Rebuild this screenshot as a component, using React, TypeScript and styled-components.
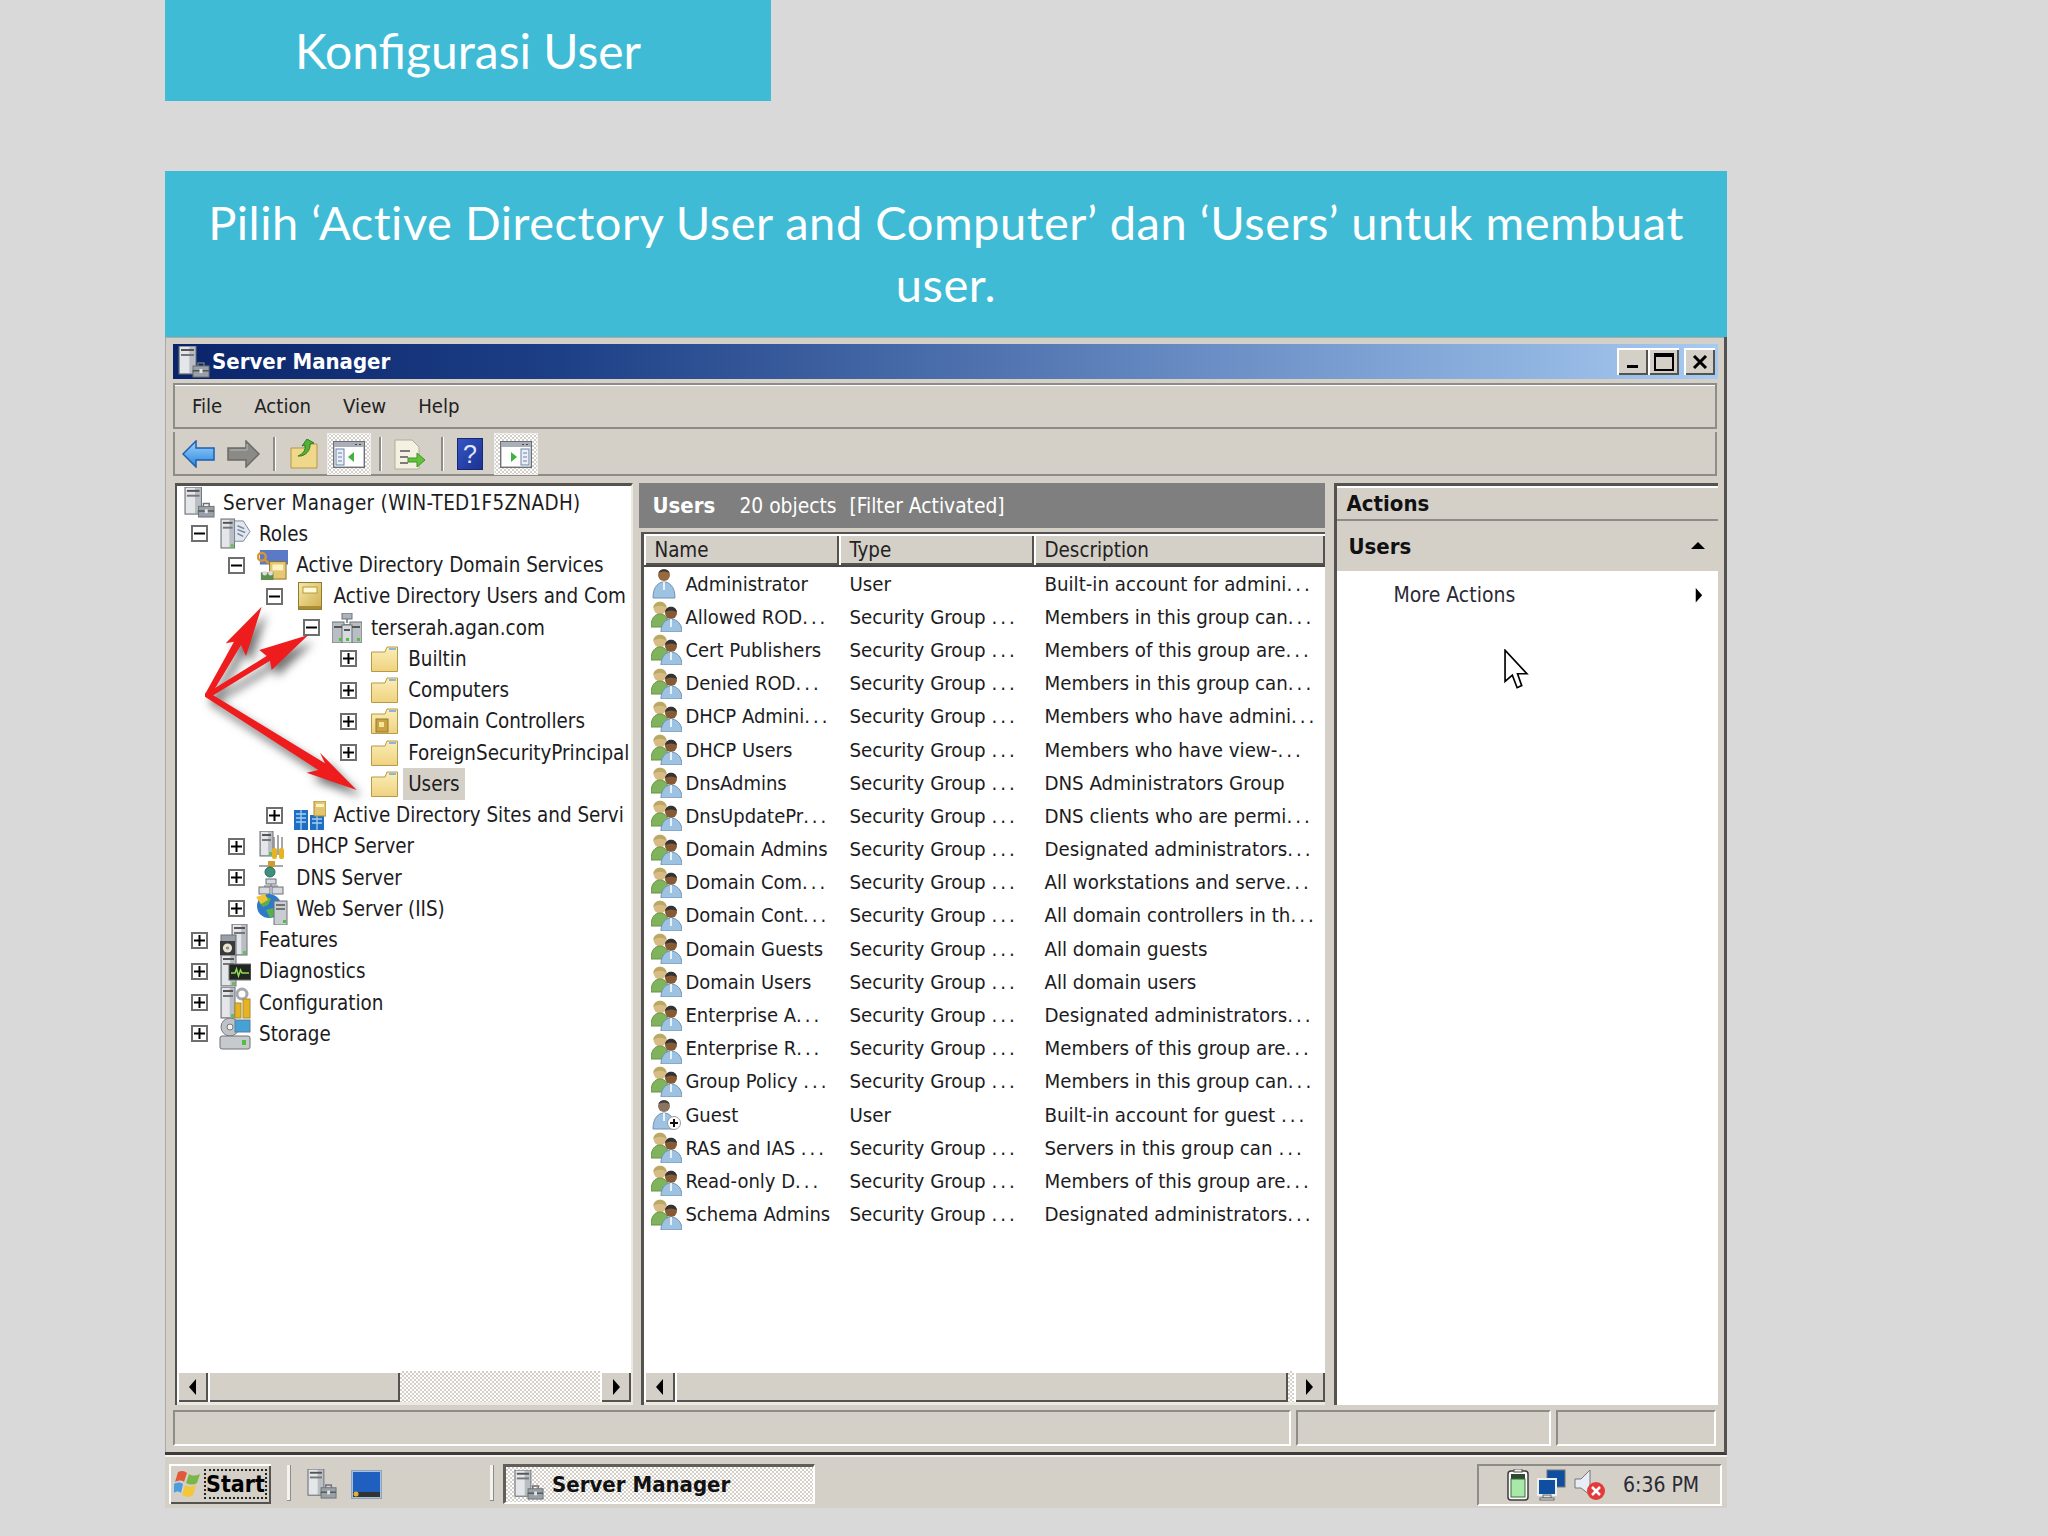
import React from "react";
import styled, { createGlobalStyle, css } from "styled-components";

const Global = createGlobalStyle`
  html, body { margin: 0; padding: 0; background: #d9d9d9; }
  #root { width: 2048px; height: 1536px; overflow: hidden; }
`;

const FACE = "#d4d0c8";
const UI = `"DejaVu Sans Condensed", "DejaVu Sans", "Liberation Sans", sans-serif`;

const raised = css`
  background: ${FACE};
  box-shadow: inset 2px 2px 0 #fff, inset -2px -2px 0 #55534f;
`;

const Slide = styled.div`
  width: 2048px;
  height: 1536px;
  background: #d9d9d9;
  padding-left: 165px;
  box-sizing: border-box;
  font-family: ${UI};
`;
const TitleBox = styled.div`
  width: 606px;
  height: 101px;
  margin-bottom: 70px;
  background: #3fbbd6;
  color: #fff;
  font: 400 48px/101px Lato, "Open Sans", sans-serif;
  text-align: center;
`;
const Banner = styled.div`
  width: 1562px;
  height: 166px;
  box-sizing: border-box;
  padding: 20px 30px 0;
  background: #3fbbd6;
  color: #fff;
  font: 400 47px/62px Lato, "Open Sans", sans-serif;
  letter-spacing: 0.53px;
  text-align: center;
`;
const Win = styled.div`
  width: 1562px;
  height: 1118px;
  box-sizing: border-box;
  padding: 7px 6px 0 8px;
  background: ${FACE};
  border-right: 3px solid #55534f;
  border-bottom: 3px solid #3d3c3a;
  box-shadow: inset 1px 1px 0 #a8a8a4;
  display: flex;
  flex-direction: column;
`;
const TitleBar = styled.div`
  height: 35px;
  margin-bottom: 4px;
  display: flex;
  align-items: center;
  padding: 0 3px 0 5px;
  background: linear-gradient(90deg, #0a246a 0%, #1d3f86 25%, #6f93c9 70%, #a6caf0 100%);
`;
const TitleText = styled.span`
  flex: 1;
  margin-left: 2px;
  color: #fff;
  font-weight: 700;
  font-size: 22px;
`;
const CtlBtn = styled.div<{ $gap?: number }>`
  ${raised}
  width: 31px;
  height: 27px;
  margin-left: ${(p) => p.$gap ?? 0}px;
  display: flex;
  align-items: center;
  justify-content: center;
`;
const MenuBar = styled.div`
  height: 46px;
  margin-right: 1px;
  margin-bottom: 3px;
  box-sizing: border-box;
  padding-left: 19px;
  display: flex;
  align-items: center;
  gap: 32px;
  background: ${FACE};
  font-size: 20.2px;
  color: #222;
  box-shadow: inset 2px 2px 0 #8e8c87, inset -2px -2px 0 #8e8c87, inset 0 3px 0 #fff;
`;
const ToolBar = styled.div`
  height: 44px;
  margin-right: 1px;
  margin-bottom: 7px;
  box-sizing: border-box;
  padding-left: 9px;
  display: flex;
  align-items: center;
  background: ${FACE};
  box-shadow: inset 2px 0 0 #8e8c87, inset -2px -2px 0 #8e8c87;
`;
const ToolSlot = styled.div<{ $w: number; $ml?: number }>`
  width: ${(p) => p.$w}px;
  margin-left: ${(p) => p.$ml ?? 0}px;
  display: flex;
  align-items: center;
  justify-content: center;
`;
const ToolSep = styled.div<{ $ml: number }>`
  width: 2px;
  height: 34px;
  margin-left: ${(p) => p.$ml}px;
  background: #8e8c87;
  box-shadow: 1px 0 0 #fff;
`;
const ToolToggle = styled.div<{ $ml: number }>`
  width: 44px;
  height: 42px;
  margin-left: ${(p) => p.$ml}px;
  display: flex;
  align-items: center;
  justify-content: center;
  background: repeating-conic-gradient(#d4d0c8 0 25%, #fff 0 50%) 0 0 / 4px 4px;
  box-shadow: inset 0 0 0 1px #eee;
`;
const Panes = styled.div`
  height: 922px;
  display: flex;
  margin-bottom: 5px;
`;
const TreePane = styled.div`
  position: relative;
  width: 459px;
  box-sizing: border-box;
  margin-left: 2px;
  display: flex;
  flex-direction: column;
  background: #fff;
  border-top: 3px solid #55534f;
  border-left: 2px solid #55534f;
  border-right: 2px solid #ece9e2;
  overflow: hidden;
`;
const TreeBody = styled.div`
  flex: 1;
  padding-top: 1px;
  overflow: hidden;
`;
const TreeRow = styled.div<{ $level: number }>`
  height: 31.25px;
  display: flex;
  align-items: center;
  white-space: nowrap;
  font-size: 20.4px;
  color: #1c1c22;
  padding-left: ${(p) => (p.$level === 0 ? 7 : 14 + (p.$level - 1) * 37.3)}px;
`;
const Expander = styled.div`
  flex: 0 0 17px;
  width: 17px;
  height: 17px;
  margin-right: 12px;
  box-sizing: border-box;
  border: 2px solid #6f6f6f;
  background: #fff;
  display: flex;
  align-items: center;
  justify-content: center;
`;
const ExpanderGap = styled.div`
  flex: 0 0 29px;
`;
const TreeIconSlot = styled.div`
  flex: 0 0 30px;
  width: 30px;
  height: 31px;
  display: flex;
  align-items: center;
  justify-content: center;
  svg {
    flex: none;
  }
`;
const TreeLabel = styled.span<{ $sel?: boolean; $track?: boolean }>`
  margin-left: ${(p) => (p.$sel ? 4 : 9)}px;
  padding: ${(p) => (p.$sel ? "4px 5px" : "0")};
  background: ${(p) => (p.$sel ? FACE : "transparent")};
  letter-spacing: ${(p) => (p.$track ? "0.36px" : "0")};
`;
const ArrowLayer = styled.svg`
  position: absolute;
  left: 13px;
  top: 114px;
  filter: drop-shadow(5px 7px 5px rgba(0, 0, 0, 0.55));
  pointer-events: none;
`;
const Scroll = styled.div`
  height: 31px;
  flex: 0 0 31px;
  display: flex;
  background: ${FACE};
`;
const ScrollBtn = styled.div`
  ${raised}
  flex: 0 0 31px;
  display: flex;
  align-items: center;
  justify-content: center;
`;
const Thumb = styled.div<{ $w?: number }>`
  ${raised}
  flex: ${(p) => (p.$w ? `0 0 ${p.$w}px` : "1")};
`;
const Track = styled.div<{ $w?: number }>`
  flex: ${(p) => (p.$w ? `0 0 ${p.$w}px` : "1")};
  background: repeating-conic-gradient(#d4d0c8 0 25%, #fff 0 50%) 0 0 / 4px 4px;
`;
const ScrollFoot = styled.div`
  height: 3px;
  flex: 0 0 3px;
  background: #ece9e2;
`;
const MidPane = styled.div`
  width: 686px;
  margin-left: 6px;
  display: flex;
  flex-direction: column;
`;
const MidHead = styled.div`
  flex: 0 0 45px;
  display: flex;
  align-items: center;
  padding-left: 13px;
  background: #7f7f7f;
  color: #fff;
  font-size: 20.8px;
  margin-bottom: 4px;
  white-space: nowrap;
`;
const MidTitle = styled.b`
  width: 87px;
  font-size: 22px;
`;
const MidCount = styled.span`
  width: 110px;
`;
const ListBox = styled.div`
  flex: 1;
  min-height: 0;
  margin-left: 2px;
  display: flex;
  flex-direction: column;
  background: #fff;
  border-top: 2px solid #55534f;
  border-left: 3px solid #55534f;
  overflow: hidden;
`;
const HeadRow = styled.div`
  flex: 0 0 33px;
  box-sizing: border-box;
  display: grid;
  grid-template-columns: 195px 195px 1fr;
  border-bottom: 2px solid #4a4946;
`;
const HeadCell = styled.div`
  ${raised}
  height: 31px;
  box-sizing: border-box;
  padding: 1px 0 0 10px;
  font-size: 20.4px;
  line-height: 31px;
  color: #222;
`;
const Rows = styled.div`
  flex: 1;
  overflow: hidden;
`;
const Row = styled.div`
  height: 33.2px;
  display: grid;
  grid-template-columns: 195px 195px 1fr;
  align-items: center;
  font-size: 20px;
  color: #1c1c22;
  white-space: nowrap;
`;
const NameCell = styled.div`
  display: flex;
  align-items: center;
  padding-left: 7px;
  overflow: hidden;
`;
const NameText = styled.span`
  margin-left: 3px;
`;
const Cell = styled.div`
  padding-left: 10px;
  font-size: 20.3px;
  overflow: hidden;
`;
const Dots = styled.span`
  letter-spacing: 3px;
`;
const ActionsPane = styled.div`
  position: relative;
  width: 382px;
  margin-left: 9px;
  display: flex;
  flex-direction: column;
  background: #fff;
  border-top: 3px solid #55534f;
  border-left: 3px solid #55534f;
`;
const ActionsHead = styled.div`
  flex: 0 0 34px;
  box-sizing: border-box;
  padding-left: 10px;
  background: ${FACE};
  border-top: 2px solid #fff;
  border-bottom: 2px solid #8e8c87;
  font-size: 22px;
  font-weight: 700;
  line-height: 31px;
  color: #111;
`;
const ActionsGroup = styled.div`
  flex: 0 0 50px;
  display: flex;
  align-items: center;
  justify-content: space-between;
  padding: 0 13px 0 12px;
  background: ${FACE};
  font-size: 22px;
  font-weight: 700;
  color: #111;
`;
const ActionItem = styled.div`
  margin-top: 6px;
  height: 36px;
  display: flex;
  align-items: center;
  justify-content: space-between;
  padding: 0 14px 0 57px;
  font-size: 21px;
  color: #2a2a35;
`;
const Cursor = styled.svg`
  position: absolute;
  left: 167px;
  top: 163px;
`;
const StatusBar = styled.div`
  height: 36px;
  display: flex;
  gap: 5px;
  margin-right: 2px;
`;
const StatusCell = styled.div<{ $w?: number }>`
  flex: ${(p) => (p.$w ? `0 0 ${p.$w}px` : "1")};
  box-sizing: border-box;
  border-top: 2px solid #8e8c87;
  border-left: 2px solid #8e8c87;
  border-right: 2px solid #fff;
  border-bottom: 2px solid #fff;
`;
const Taskbar = styled.div`
  width: 1562px;
  height: 53px;
  box-sizing: border-box;
  padding: 7px 4px 4px 4px;
  display: flex;
  background: ${FACE};
  border-top: 2px solid #f4f3ef;
`;
const StartBtn = styled.div`
  ${raised}
  width: 102px;
  height: 40px;
  display: flex;
  align-items: center;
  padding-left: 5px;
  box-sizing: border-box;
  gap: 2px;
`;
const StartLabel = styled.span`
  font-weight: 700;
  font-size: 23px;
  color: #000;
  padding: 1px 2px;
  line-height: 28px;
  outline: 2px dotted #222;
  outline-offset: -2px;
`;
const TaskSep = styled.div<{ $ml: number }>`
  width: 4px;
  height: 36px;
  margin: 1px 0 0 ${(p) => p.$ml}px;
  background: #f4f3ef;
  box-shadow: inset -1px -1px 0 #8e8c87;
`;
const QuickIcon = styled.div<{ $ml: number }>`
  margin-left: ${(p) => p.$ml}px;
  display: flex;
  align-items: center;
`;
const TaskItem = styled.div`
  width: 312px;
  height: 40px;
  margin-left: 9px;
  box-sizing: border-box;
  padding-left: 8px;
  display: flex;
  align-items: center;
  gap: 8px;
  font-weight: 700;
  font-size: 22px;
  color: #111;
  background: repeating-conic-gradient(#d4d0c8 0 25%, #fff 0 50%) 0 0 / 4px 4px;
  border-top: 3px solid #605e5a;
  border-left: 3px solid #605e5a;
  border-right: 2px solid #fff;
  border-bottom: 2px solid #fff;
`;
const Tray = styled.div`
  width: 245px;
  height: 42px;
  margin-left: auto;
  margin-right: 1px;
  box-sizing: border-box;
  padding-left: 28px;
  display: flex;
  align-items: center;
  gap: 8px;
  border-top: 2px solid #8e8c87;
  border-left: 2px solid #8e8c87;
  border-right: 2px solid #fff;
  border-bottom: 2px solid #fff;
`;
const Clock = styled.span`
  margin-left: 9px;
  font-size: 21px;
  color: #2a2a35;
`;

/* ---------- icons ---------- */
type IP = { s?: number };

const Plus = () => (
  <svg width="11" height="11" viewBox="0 0 11 11">
    <path d="M0 5.5H11M5.5 0V11" stroke="#000" strokeWidth="2" />
  </svg>
);
const Minus = () => (
  <svg width="11" height="11" viewBox="0 0 11 11">
    <path d="M0 5.5H11" stroke="#000" strokeWidth="2" />
  </svg>
);
const Tri = ({ dir, size = 12 }: { dir: "l" | "r" | "u"; size?: number }) => {
  const d = dir === "l" ? "M9 0V16L2 8Z" : dir === "r" ? "M3 0V16L10 8Z" : "M0 10H14L7 3Z";
  return (
    <svg width={size} height={dir === "u" ? size : size * 1.5} viewBox={dir === "u" ? "0 0 14 14" : "0 0 12 16"}>
      <path d={d} fill="#000" />
    </svg>
  );
};
const Tower = ({ x = 4, y = 1, w = 16, h = 24 }: { x?: number; y?: number; w?: number; h?: number }) => (
  <g>
    <rect x={x} y={y} width={w} height={h} fill="#b9bdc4" stroke="#6d7178" strokeWidth="1" />
    <rect x={x + 1} y={y + 1} width={w * 0.55} height={h - 2} fill="#e4e6ea" />
    <rect x={x + 2} y={y + 3} width={w - 4} height="2" fill="#555" />
    <rect x={x + 2} y={y + 8} width={w - 4} height="2" fill="#777" />
    <rect x={x + w - 4} y={y + h - 4} width="3" height="3" fill="#5fc24b" />
  </g>
);
const Case = ({ x = 14, y = 20 }: { x?: number; y?: number }) => (
  <g>
    <path d={`M${x + 5} ${y}v-3h6v3`} fill="none" stroke="#6d7178" strokeWidth="1.5" />
    <rect x={x} y={y} width="16" height="11" fill="#9aa0a8" stroke="#6d7178" />
    <rect x={x} y={y + 4} width="16" height="1.5" fill="#555" />
    <rect x={x + 6.5} y={y + 3} width="3" height="4" fill="#e4e6ea" />
  </g>
);
const ServerMgrIcon = ({ s = 31 }: IP) => (
  <svg width={s} height={s} viewBox="0 0 32 32">
    <Tower x={1} y={0} w={17} h={28} />
    <Case x={15} y={20} />
  </svg>
);
const RolesIcon = ({ s = 31 }: IP) => (
  <svg width={s} height={s} viewBox="0 0 32 32">
    <Tower x={1} y={1} w={14} h={30} />
    <path d="M15 3 24 3 31 14 24 24 15 24Z" fill="#dfe7f2" stroke="#7d8794" />
    <path d="M18 8l7 3M18 12l8 3M18 16l6 3" stroke="#7d8794" strokeWidth="1.5" />
  </svg>
);
const AddsIcon = ({ s = 31 }: IP) => (
  <svg width={s} height={s} viewBox="0 0 32 32">
    <rect x="3" y="0" width="29" height="15" fill="#5b79c6" />
    <circle cx="5" cy="7" r="4" fill="none" stroke="#d9962c" strokeWidth="2.5" />
    <path d="M8 10 17 18" stroke="#d9962c" strokeWidth="2.5" />
    <rect x="13" y="12" width="17" height="18" fill="#e6c873" stroke="#8b7326" />
    <rect x="16" y="15" width="11" height="6" fill="#fff3c4" />
    <rect x="4" y="23" width="13" height="8" fill="#5f8f4e" />
    <circle cx="8" cy="24" r="2.4" fill="#ddd" />
    <circle cx="14" cy="24" r="2.4" fill="#ddd" />
  </svg>
);
const BookIcon = ({ s = 24 }: IP) => (
  <svg width={s} height={s * 1.17} viewBox="0 0 24 28">
    <defs>
      <linearGradient id="bk" x1="0" y1="0" x2="1" y2="1">
        <stop offset="0" stopColor="#f4e8a8" />
        <stop offset="1" stopColor="#d1ae4f" />
      </linearGradient>
    </defs>
    <rect x="0.5" y="0.5" width="23" height="27" fill="url(#bk)" stroke="#8f7a2e" />
    <rect x="5" y="5" width="14" height="6" fill="#fff9d8" stroke="#b89a3c" />
    <rect x="1" y="24" width="22" height="3" fill="#a98c33" />
  </svg>
);
const DomainIcon = ({ s = 30 }: IP) => (
  <svg width={s} height={s} viewBox="0 0 30 30">
    <rect x="10" y="0" width="10" height="6" fill="#aeb4bb" stroke="#6d7178" />
    <path d="M15 6V10M5 12H25" stroke="#6d7178" strokeWidth="1.5" />
    <rect x="0" y="9" width="12" height="21" fill="#b9bec5" stroke="#6d7178" />
    <rect x="18" y="9" width="12" height="21" fill="#b9bec5" stroke="#6d7178" />
    <rect x="10" y="12" width="10" height="18" fill="#d6dade" stroke="#6d7178" />
    <rect x="2" y="13" width="8" height="2" fill="#555" />
    <rect x="20" y="13" width="8" height="2" fill="#555" />
    <rect x="12" y="16" width="6" height="2" fill="#555" />
    <rect x="7" y="25" width="3" height="3" fill="#4ec23a" />
    <rect x="14" y="25" width="3" height="3" fill="#4ec23a" />
    <rect x="25" y="25" width="3" height="3" fill="#4ec23a" />
  </svg>
);
const FolderIcon = ({ dc }: { dc?: boolean }) => (
  <svg width="27" height="26" viewBox="0 0 27 26">
    <defs>
      <linearGradient id="fd" x1="0" y1="0" x2="0" y2="1">
        <stop offset="0" stopColor="#fbeeb8" />
        <stop offset="1" stopColor="#efd27f" />
      </linearGradient>
    </defs>
    <path d="M0.5 6 L14 6 L16 1 L26.5 1 V25.5 H0.5Z" fill="url(#fd)" stroke="#b79a46" />
    <rect x="18" y="2" width="7" height="2" fill="#8fb4dc" />
    {dc && (
      <g>
        <rect x="5" y="11" width="12" height="13" fill="#c9a445" stroke="#8f7a2e" />
        <rect x="8" y="14" width="5" height="5" fill="#f7e49a" />
      </g>
    )}
  </svg>
);
const SitesIcon = () => (
  <svg width="32" height="29" viewBox="0 0 32 29">
    <rect x="0" y="9" width="14" height="20" fill="#1e6fc4" />
    <rect x="16" y="14" width="14" height="15" fill="#1e6fc4" />
    <path d="M2 13h10M2 17h10M2 21h10M7 9v20M18 18h10M18 22h10M23 14v15" stroke="#9fd0f3" strokeWidth="1.3" />
    <rect x="20" y="0" width="12" height="15" fill="#e2c66f" stroke="#a98c33" />
    <rect x="22" y="3" width="8" height="3" fill="#fff3c4" />
  </svg>
);
const DhcpIcon = () => (
  <svg width="27" height="30" viewBox="0 0 27 30">
    <Tower x={1} y={0} w={13} h={25} />
    <path d="M15 6v18M19 4v20M23 6v18" stroke="#8a8a8a" strokeWidth="1.5" />
    <rect x="13" y="17" width="5" height="11" rx="2" fill="#e6b422" />
    <rect x="20" y="17" width="5" height="11" rx="2" fill="#e6b422" />
  </svg>
);
const DnsIcon = () => (
  <svg width="28" height="34" viewBox="0 0 28 34">
    <path d="M1 5H25" stroke="#8a8a8a" strokeWidth="1.5" />
    <rect x="10" y="0" width="7" height="6" fill="#d09a32" />
    <circle cx="12" cy="11" r="5" fill="#3f8f7a" stroke="#2a6a5a" />
    <rect x="8" y="18" width="10" height="5" fill="#d5d8dc" stroke="#6d7178" />
    <rect x="1" y="26" width="11" height="7" fill="#d5d8dc" stroke="#6d7178" />
    <rect x="14" y="26" width="11" height="7" fill="#d5d8dc" stroke="#6d7178" />
    <path d="M13 23v3M6 25H20" stroke="#6d7178" />
  </svg>
);
const IisIcon = () => (
  <svg width="32" height="32" viewBox="0 0 32 32">
    <circle cx="13" cy="13" r="12" fill="#2f79c9" />
    <path d="M3 9c4-5 9-6 12-3l-3 6-5 2ZM10 17l7-2 2 7-5 3Z" fill="#58b04a" />
    <path d="M0 4 9 1 12 7 5 11Z" fill="#f0c438" />
    <rect x="18" y="8" width="13" height="24" fill="#c9ccd1" stroke="#6d7178" />
    <path d="M20 12h9M20 16h9" stroke="#555" strokeWidth="1.5" />
    <rect x="27" y="27" width="3" height="3" fill="#4ec23a" />
  </svg>
);
const FeaturesIcon = () => (
  <svg width="30" height="32" viewBox="0 0 30 32">
    <Tower x={12} y={0} w={15} h={31} />
    <rect x="1" y="11" width="15" height="21" fill="#9aa0a8" stroke="#6d7178" />
    <rect x="0" y="17" width="15" height="14" fill="#3a3a3a" />
    <circle cx="7.5" cy="24" r="4.6" fill="#e9e4cf" />
    <circle cx="7.5" cy="24" r="1.6" fill="#888" />
  </svg>
);
const DiagIcon = () => (
  <svg width="31" height="32" viewBox="0 0 31 32">
    <Tower x={1} y={0} w={15} h={31} />
    <rect x="9" y="9" width="22" height="16" fill="#23261f" stroke="#6d7178" />
    <path d="M11 18h4l1.5-4 2 7 2-6 1.5 3h7" stroke="#8ddc55" strokeWidth="1.5" fill="none" />
  </svg>
);
const ConfigIcon = () => (
  <svg width="31" height="32" viewBox="0 0 31 32">
    <Tower x={1} y={0} w={14} h={31} />
    <circle cx="22" cy="7" r="5" fill="none" stroke="#a5a8ad" strokeWidth="3" />
    <rect x="15" y="16" width="6" height="15" fill="#e6b422" stroke="#a98c33" />
    <rect x="23" y="12" width="7" height="19" fill="#e6b422" stroke="#a98c33" />
  </svg>
);
const StorageIcon = () => (
  <svg width="32" height="32" viewBox="0 0 32 32">
    <circle cx="11" cy="9" r="9" fill="#bfc3c8" stroke="#777" />
    <circle cx="11" cy="9" r="3" fill="#f2f2f2" stroke="#777" />
    <rect x="16" y="2" width="15" height="12" fill="#45a2d6" stroke="#5c7f96" />
    <rect x="1" y="18" width="30" height="13" rx="2" fill="#c7cacd" stroke="#6d7178" />
    <rect x="23" y="22" width="4" height="5" fill="#4ec23a" />
  </svg>
);
const UserIcon = ({ guest }: { guest?: boolean }) => (
  <svg width="31" height="31" viewBox="0 0 31 31">
    <circle cx="13" cy="7" r="6" fill={guest ? "#8a7460" : "#9a6a3f"} />
    <path d="M7.5 5C9 0 17 0 18.5 5 15 3 11 3 7.5 5Z" fill="#3b3b3b" />
    <path d="M2 30C2 18 8 14 13 14 18 14 24 18 24 30Z" fill="#9ec3e2" stroke="#6e93b3" />
    <path d="M13 14v8" stroke="#e9f2f8" strokeWidth="2" />
    {guest && (
      <g>
        <circle cx="23" cy="24" r="6.5" fill="#fff" stroke="#999" />
        <path d="M19 24h8M23 20v8" stroke="#111" strokeWidth="2" />
      </g>
    )}
  </svg>
);
const GroupIcon = () => (
  <svg width="31" height="31" viewBox="0 0 31 31">
    <circle cx="9" cy="7" r="6.5" fill="#d9bb85" />
    <path d="M2.5 7C2 -1 16 -1 15.5 7 12 4 6 4 2.5 7Z" fill="#b9a962" />
    <path d="M0 26C0 17 4 13 9 13S18 17 18 26Z" fill="#7fb45c" stroke="#6b9148" />
    <circle cx="20" cy="12" r="6" fill="#855a35" />
    <path d="M14 11C15 4 25 4 26 11 22 9 18 9 14 11Z" fill="#333" />
    <path d="M10 31C10 22 15 18 20 18S31 22 31 31Z" fill="#9ec3e2" stroke="#6e93b3" />
    <path d="M20 18v8" stroke="#e9f2f8" strokeWidth="2" />
  </svg>
);
const BackIcon = () => (
  <svg width="33" height="28" viewBox="0 0 33 28">
    <defs>
      <linearGradient id="bkA" x1="0" y1="0" x2="0" y2="1">
        <stop offset="0" stopColor="#9ed3fb" />
        <stop offset="1" stopColor="#2a85e0" />
      </linearGradient>
    </defs>
    <path d="M1 14 14 1V8H32V20H14V27Z" fill="url(#bkA)" stroke="#1e5fae" strokeWidth="1.5" />
  </svg>
);
const ForwardIcon = () => (
  <svg width="33" height="28" viewBox="0 0 33 28">
    <path d="M32 14 19 1V8H1V20H19V27Z" fill="#8a8a86" stroke="#6a6a66" strokeWidth="1.5" />
    <path d="M3 10H20V4" fill="none" stroke="#b8b8b4" />
  </svg>
);
const UpIcon = () => (
  <svg width="28" height="30" viewBox="0 0 28 30">
    <path d="M1 9H14L16 5H27V29H1Z" fill="#f0d88a" stroke="#b39744" />
    <path d="M8 17C13 15 16 11 15 6L12 7 17 0 24 4 20 5C21 11 15 18 8 17Z" fill="#55b03a" stroke="#2e7f20" />
  </svg>
);
const PaneToggleIcon = ({ right }: { right?: boolean }) => (
  <svg width="32" height="27" viewBox="0 0 32 27">
    <rect x="0.7" y="0.7" width="30.6" height="25.6" fill="#fff" stroke="#6b6f78" strokeWidth="1.4" />
    <rect x="1" y="1" width="30" height="5" fill="#a9aeb8" />
    <path d="M22 3.5h2M26 3.5h2" stroke="#444" />
    {right ? (
      <g>
        <path d="M11 11 17 16 11 21Z" fill="#3eb33e" />
        <rect x="21" y="8" width="8" height="16" fill="#e9eef7" stroke="#6b82a8" />
        <path d="M23 12h4M23 16h4M23 20h4" stroke="#6b82a8" />
      </g>
    ) : (
      <g>
        <rect x="3" y="8" width="8" height="16" fill="#e9eef7" stroke="#6b82a8" />
        <path d="M5 12h4M5 16h4M5 20h4" stroke="#6b82a8" />
        <path d="M21 11 15 16 21 21Z" fill="#3eb33e" />
      </g>
    )}
  </svg>
);
const ExportIcon = () => (
  <svg width="32" height="31" viewBox="0 0 32 31">
    <path d="M1 1H18L25 8V30H1Z" fill="#f4f1e2" stroke="#b3ae94" />
    <path d="M6 12h10M6 18h8M6 24h8" stroke="#555" strokeWidth="1.5" />
    <path d="M14 19H23V14L31 21 23 28V23H14Z" fill="#63c13c" stroke="#3f9324" />
  </svg>
);
const HelpIcon = () => (
  <svg width="26" height="32" viewBox="0 0 26 32">
    <defs>
      <linearGradient id="hp" x1="0" y1="0" x2="1" y2="1">
        <stop offset="0" stopColor="#3556c4" />
        <stop offset="1" stopColor="#1c3192" />
      </linearGradient>
    </defs>
    <rect x="0.5" y="0.5" width="25" height="31" fill="url(#hp)" stroke="#17286f" />
    <text x="13" y="25" fontFamily="Liberation Sans, sans-serif" fontSize="25" fill="#dfe7ff" textAnchor="middle">?</text>
  </svg>
);
const StartLogo = () => (
  <svg width="28" height="30" viewBox="0 0 28 30">
    <path d="M4 3C8 1 11 2 13 4L10 13C8 11 5 11 1 13Z" fill="#e2583b" />
    <path d="M15 5C18 7 22 7 26 5L23 14C20 16 16 16 12 14Z" fill="#7ab648" />
    <path d="M0 15C3 13 7 13 9 15L7 24C5 22 2 22 0 24Z" fill="#4c9de0" />
    <path d="M11 16C14 18 18 18 22 16L19 26C16 29 12 28 8 26Z" fill="#f4c63a" />
  </svg>
);
const DesktopIcon = () => (
  <svg width="31" height="29" viewBox="0 0 31 29">
    <rect x="0.5" y="0.5" width="30" height="28" fill="#a9bfdc" stroke="#8ca3c0" />
    <rect x="2" y="2" width="27" height="20" fill="#1f5fc0" />
    <rect x="2" y="22" width="27" height="5" fill="#333" />
    <circle cx="5" cy="24" r="2.5" fill="#e0b23a" />
  </svg>
);
const BatteryIcon = () => (
  <svg width="22" height="32" viewBox="0 0 22 32">
    <rect x="1" y="2" width="20" height="29" rx="3" fill="#fff" stroke="#3c3c3c" strokeWidth="1.5" />
    <rect x="7" y="0" width="8" height="3" fill="#eee" stroke="#555" />
    <rect x="4" y="5" width="14" height="5" fill="#2f4a30" />
    <rect x="4" y="10" width="14" height="18" fill="#a8e8a8" stroke="#3c6a3c" />
  </svg>
);
const NetIcon = () => (
  <svg width="29" height="32" viewBox="0 0 29 32">
    <rect x="10" y="1" width="18" height="17" fill="#0f4f9f" stroke="#777" />
    <rect x="1" y="10" width="18" height="16" fill="#0f4f9f" stroke="#eee" strokeWidth="2" />
    <rect x="6" y="26" width="8" height="3" fill="#ddd" stroke="#666" />
    <rect x="3" y="29" width="14" height="2" fill="#eee" stroke="#666" />
  </svg>
);
const SpeakerIcon = () => (
  <svg width="32" height="32" viewBox="0 0 32 32">
    <path d="M1 10H7L16 1V26L7 19H1Z" fill="#e8ecf4" stroke="#777" />
    <circle cx="22" cy="22" r="9" fill="#e33a3a" />
    <path d="M18 18 26 26M26 18 18 26" stroke="#fff" strokeWidth="2.5" />
  </svg>
);

/* ---------- data ---------- */
type TreeItem = {
  level: number;
  icon: React.ReactNode;
  label: string;
  exp?: "+" | "-";
  sel?: boolean;
};
const tree: TreeItem[] = [
  { level: 0, icon: <ServerMgrIcon />, label: "Server Manager (WIN-TED1F5ZNADH)" },
  { level: 1, exp: "-", icon: <RolesIcon />, label: "Roles" },
  { level: 2, exp: "-", icon: <AddsIcon />, label: "Active Directory Domain Services" },
  { level: 3, exp: "-", icon: <BookIcon />, label: "Active Directory Users and Com" },
  { level: 4, exp: "-", icon: <DomainIcon />, label: "terserah.agan.com" },
  { level: 5, exp: "+", icon: <FolderIcon />, label: "Builtin" },
  { level: 5, exp: "+", icon: <FolderIcon />, label: "Computers" },
  { level: 5, exp: "+", icon: <FolderIcon dc />, label: "Domain Controllers" },
  { level: 5, exp: "+", icon: <FolderIcon />, label: "ForeignSecurityPrincipal" },
  { level: 5, icon: <FolderIcon />, label: "Users", sel: true },
  { level: 3, exp: "+", icon: <SitesIcon />, label: "Active Directory Sites and Servi" },
  { level: 2, exp: "+", icon: <DhcpIcon />, label: "DHCP Server" },
  { level: 2, exp: "+", icon: <DnsIcon />, label: "DNS Server" },
  { level: 2, exp: "+", icon: <IisIcon />, label: "Web Server (IIS)" },
  { level: 1, exp: "+", icon: <FeaturesIcon />, label: "Features" },
  { level: 1, exp: "+", icon: <DiagIcon />, label: "Diagnostics" },
  { level: 1, exp: "+", icon: <ConfigIcon />, label: "Configuration" },
  { level: 1, exp: "+", icon: <StorageIcon />, label: "Storage" },
];

const SG = "Security Group ...";
const users: [string, string, string][] = [
  ["Administrator", "User", "Built-in account for admini..."],
  ["Allowed ROD...", SG, "Members in this group can..."],
  ["Cert Publishers", SG, "Members of this group are..."],
  ["Denied ROD...", SG, "Members in this group can..."],
  ["DHCP Admini...", SG, "Members who have admini..."],
  ["DHCP Users", SG, "Members who have view-..."],
  ["DnsAdmins", SG, "DNS Administrators Group"],
  ["DnsUpdatePr...", SG, "DNS clients who are permi..."],
  ["Domain Admins", SG, "Designated administrators..."],
  ["Domain Com...", SG, "All workstations and serve..."],
  ["Domain Cont...", SG, "All domain controllers in th..."],
  ["Domain Guests", SG, "All domain guests"],
  ["Domain Users", SG, "All domain users"],
  ["Enterprise A...", SG, "Designated administrators..."],
  ["Enterprise R...", SG, "Members of this group are..."],
  ["Group Policy ...", SG, "Members in this group can..."],
  ["Guest", "User", "Built-in account for guest ..."],
  ["RAS and IAS ...", SG, "Servers in this group can ..."],
  ["Read-only D...", SG, "Members of this group are..."],
  ["Schema Admins", SG, "Designated administrators..."],
];

const withDots = (t: string) =>
  t.endsWith("...") ? (
    <>
      {t.slice(0, -3)}
      <Dots>...</Dots>
    </>
  ) : (
    t
  );

export default function App() {
  return (
    <Slide>
      <Global />
      <TitleBox>Konfigurasi User</TitleBox>
      <Banner>Pilih ‘Active Directory User and Computer’ dan ‘Users’ untuk membuat user.</Banner>
      <Win>
        <TitleBar>
          <ServerMgrIcon s={32} />
          <TitleText>Server Manager</TitleText>
          <CtlBtn>
            <svg width="14" height="14" viewBox="0 0 14 14"><rect x="1" y="10" width="11" height="3" fill="#000" /></svg>
          </CtlBtn>
          <CtlBtn>
            <svg width="20" height="18" viewBox="0 0 20 18"><rect x="1" y="1" width="18" height="16" fill="none" stroke="#000" strokeWidth="2" /><rect x="1" y="1" width="18" height="3" /></svg>
          </CtlBtn>
          <CtlBtn $gap={5}>
            <svg width="16" height="14" viewBox="0 0 16 14"><path d="M2 1 14 13M14 1 2 13" stroke="#000" strokeWidth="3" /></svg>
          </CtlBtn>
        </TitleBar>
        <MenuBar>
          <span>File</span>
          <span>Action</span>
          <span>View</span>
          <span>Help</span>
        </MenuBar>
        <ToolBar>
          <ToolSlot $w={33}><BackIcon /></ToolSlot>
          <ToolSlot $w={33} $ml={12}><ForwardIcon /></ToolSlot>
          <ToolSep $ml={13} />
          <ToolSlot $w={28} $ml={15}><UpIcon /></ToolSlot>
          <ToolToggle $ml={9}><PaneToggleIcon /></ToolToggle>
          <ToolSep $ml={8} />
          <ToolSlot $w={32} $ml={13}><ExportIcon /></ToolSlot>
          <ToolSep $ml={15} />
          <ToolSlot $w={26} $ml={14}><HelpIcon /></ToolSlot>
          <ToolToggle $ml={11}><PaneToggleIcon right /></ToolToggle>
        </ToolBar>
        <Panes>
          <TreePane>
            <TreeBody>
              {tree.map((t) => (
                <TreeRow key={t.label} $level={t.level}>
                  {t.level > 0 &&
                    (t.exp ? (
                      <Expander>{t.exp === "+" ? <Plus /> : <Minus />}</Expander>
                    ) : (
                      <ExpanderGap />
                    ))}
                  <TreeIconSlot>{t.icon}</TreeIconSlot>
                  <TreeLabel $sel={t.sel} $track={t.level === 0}>{t.label}</TreeLabel>
                </TreeRow>
              ))}
            </TreeBody>
            <Scroll>
              <ScrollBtn><Tri dir="l" /></ScrollBtn>
              <Thumb $w={192} />
              <Track />
              <ScrollBtn><Tri dir="r" /></ScrollBtn>
            </Scroll>
            <ScrollFoot />
            <ArrowLayer width="300" height="300" viewBox="90 0 900 900">
              <polygon fill="#ee1c1c" points="135,283 222,125 197,130 305,20 258,168 243,135 150,290" />
              <polygon fill="#ee1c1c" points="135,283 320,168 298,150 445,105 335,210 330,182 150,292" />
              <polygon fill="#ee1c1c" points="135,280 150,280 495,490 480,458 590,570 440,518 475,510 135,290" />
            </ArrowLayer>
          </TreePane>
          <MidPane>
            <MidHead>
              <MidTitle>Users</MidTitle>
              <MidCount>20 objects</MidCount>
              <span>[Filter Activated]</span>
            </MidHead>
            <ListBox>
              <HeadRow>
                <HeadCell>Name</HeadCell>
                <HeadCell>Type</HeadCell>
                <HeadCell>Description</HeadCell>
              </HeadRow>
              <Rows>
                {users.map(([n, ty, d]) => (
                  <Row key={n}>
                    <NameCell>
                      {n === "Administrator" ? <UserIcon /> : n === "Guest" ? <UserIcon guest /> : <GroupIcon />}
                      <NameText>{withDots(n)}</NameText>
                    </NameCell>
                    <Cell>{withDots(ty)}</Cell>
                    <Cell>{withDots(d)}</Cell>
                  </Row>
                ))}
              </Rows>
              <Scroll>
                <ScrollBtn><Tri dir="l" /></ScrollBtn>
                <Thumb />
                <Track $w={6} />
                <ScrollBtn><Tri dir="r" /></ScrollBtn>
              </Scroll>
              <ScrollFoot />
            </ListBox>
          </MidPane>
          <ActionsPane>
            <ActionsHead>Actions</ActionsHead>
            <ActionsGroup>
              <span>Users</span>
              <Tri dir="u" size={14} />
            </ActionsGroup>
            <ActionItem>
              <span>More Actions</span>
              <Tri dir="r" size={11} />
            </ActionItem>
            <Cursor width="25" height="42" viewBox="0 0 12 20">
              <path d="M0.5 0.5V15.5L4 12.5 6.3 18.5 8.5 17.5 6.5 11.8H11Z" fill="#fff" stroke="#000" strokeWidth="0.8" />
            </Cursor>
          </ActionsPane>
        </Panes>
        <StatusBar>
          <StatusCell />
          <StatusCell $w={255} />
          <StatusCell $w={160} />
        </StatusBar>
      </Win>
      <Taskbar>
        <StartBtn>
          <StartLogo />
          <StartLabel>Start</StartLabel>
        </StartBtn>
        <TaskSep $ml={16} />
        <QuickIcon $ml={16}><ServerMgrIcon s={30} /></QuickIcon>
        <QuickIcon $ml={14}><DesktopIcon /></QuickIcon>
        <TaskSep $ml={108} />
        <TaskItem>
          <ServerMgrIcon s={30} />
          <span>Server Manager</span>
        </TaskItem>
        <Tray>
          <BatteryIcon />
          <NetIcon />
          <SpeakerIcon />
          <Clock>6:36 PM</Clock>
        </Tray>
      </Taskbar>
    </Slide>
  );
}
